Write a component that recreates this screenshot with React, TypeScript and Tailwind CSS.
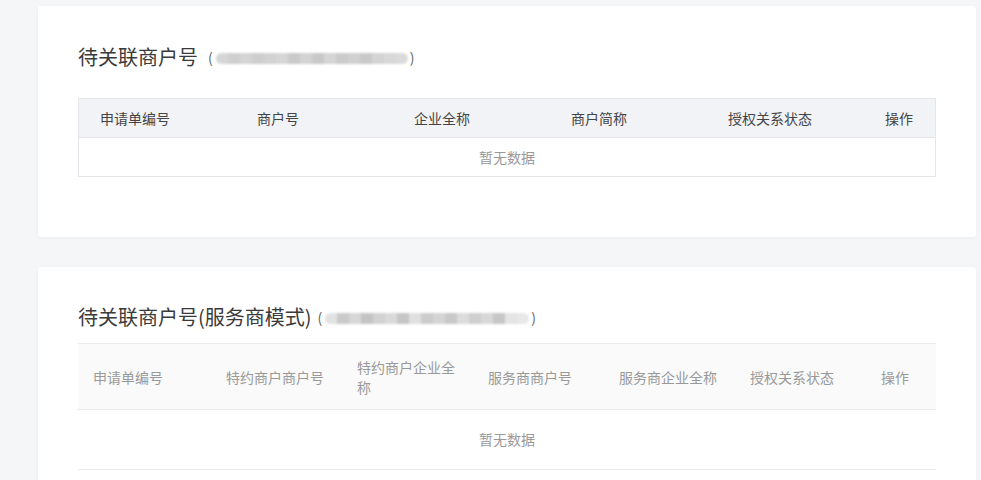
const font = { fontFamily: '"Noto Sans CJK SC", "Noto Sans", sans-serif' }

const Blur = ({ shades }: { shades: string[] }) => {
  return (
    <span className="inline-flex items-center text-[14px] text-[#666]">
      <span className="mr-[3px]">(</span>
      <span className="mt-[3px] flex h-[11px] overflow-hidden rounded-full blur-[1px]">
        {shades.map((c, i) => (
          <span key={i} className="h-full w-[12px]" style={{ background: c }} />
        ))}
      </span>
      <span className="ml-[2px]">)</span>
    </span>
  )
}

const shades1 = ['#d6d6d6', '#cfcfcf', '#d4d4d4', '#cdcdcd', '#d2d2d2', '#d6d6d6', '#cacaca', '#d3d3d3', '#c8c8c8', '#d5d5d5', '#cbcbcb', '#d0d0d0', '#c9c9c9', '#d4d4d4', '#d8d8d8', '#dadada']
const shades2 = ['#e2e2e2', '#cacaca', '#d6d6d6', '#c4c4c4', '#d2d2d2', '#dadada', '#c6c6c6', '#e0e0e0', '#cccccc', '#d4d4d4', '#c8c8c8', '#dcdcdc', '#cfcfcf', '#d8d8d8', '#c7c7c7', '#e4e4e4', '#e8e8e8']

const cols1 = ['申请单编号', '商户号', '企业全称', '商户简称', '授权关系状态', '操作']
const cols2 = ['申请单编号', '特约商户商户号', '特约商户企业全称', '服务商商户号', '服务商企业全称', '授权关系状态', '操作']

export default function App() {
  return (
    <div className="h-[480px] overflow-hidden bg-[#f5f6f8] pt-[6px] pl-[38px] pr-[5px]" style={font}>
      <div className="rounded-[3px] bg-white px-[40px] pt-[37px] pb-[60px] shadow-[0_1px_4px_rgba(0,0,0,0.04)]">
        <div className="flex h-[28px] items-center gap-[10px]">
          <span className="text-[20px] text-[#3a3a3a]">待关联商户号</span>
          <Blur shades={shades1} />
        </div>
        <div className="mt-[27px] border border-[#e4e6eb]">
          <div className="grid h-[38px] grid-cols-[157px_157px_157px_157px_157px_1fr] items-center bg-[#f2f3f7] text-[14px] text-[#444]">
            {cols1.map((c) => (
              <div key={c} className="pl-[21px]">{c}</div>
            ))}
          </div>
          <div className="flex h-[39px] items-center justify-center border-t border-[#e4e6eb] text-[14px] text-[#999]">
            暂无数据
          </div>
        </div>
      </div>

      <div className="mt-[30px] h-[300px] rounded-[3px] bg-white px-[40px] pt-[36px] shadow-[0_1px_4px_rgba(0,0,0,0.04)]">
        <div className="flex h-[28px] items-center gap-[6px]">
          <span className="text-[20px] text-[#3a3a3a]">待关联商户号(服务商模式)</span>
          <Blur shades={shades2} />
        </div>
        <div className="mt-[12px]">
          <div className="grid h-[67px] grid-cols-[133px_131px_131px_131px_131px_131px_1fr] items-center border-y border-[#ebebeb] bg-[#fafafa] text-[14px] leading-[20px] text-[#999]">
            {cols2.map((c) => (
              <div key={c} className="px-[15px]">{c}</div>
            ))}
          </div>
          <div className="flex h-[60px] items-center justify-center border-b border-[#ebebeb] text-[14px] text-[#999]">
            暂无数据
          </div>
        </div>
      </div>
    </div>
  )
}
